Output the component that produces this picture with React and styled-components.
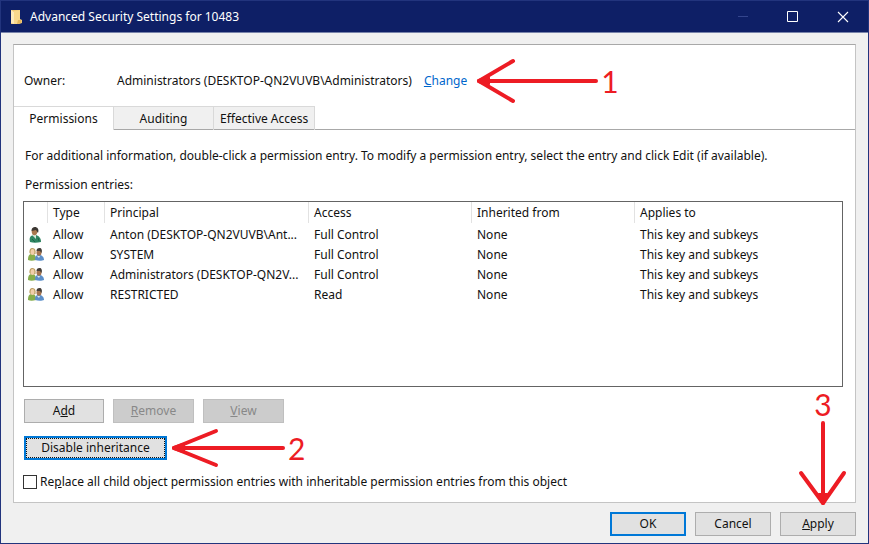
import React, { useState } from "react";
import styled, { createGlobalStyle } from "styled-components";

const columns = ["", "Type", "Principal", "Access", "Inherited from", "Applies to"];

const entries = [
  { kind: "user", principal: "Anton (DESKTOP-QN2VUVB\\Ant...", access: "Full Control" },
  { kind: "group", principal: "SYSTEM", access: "Full Control" },
  { kind: "group", principal: "Administrators (DESKTOP-QN2V...", access: "Full Control" },
  { kind: "group", principal: "RESTRICTED", access: "Read" },
];

const tabs = ["Permissions", "Auditing", "Effective Access"];

export default function App() {
  const [activeTab, setActiveTab] = useState("Permissions");
  const [replaceAll, setReplaceAll] = useState(false);

  return (
    <>
      <GlobalStyle />
      <Window>
        <TitleBar>
          <FolderIcon />
          <Title>Advanced Security Settings for 10483</Title>
          <CaptionButton aria-label="Minimize" disabled>
            <svg width="12" height="12" viewBox="0 0 12 12">
              <path d="M1 5.5h10" stroke="#34458d" />
            </svg>
          </CaptionButton>
          <CaptionButton aria-label="Maximize">
            <svg width="12" height="12" viewBox="0 0 12 12">
              <path d="M.5 .5h10v10h-10z" fill="none" stroke="#fff" />
            </svg>
          </CaptionButton>
          <CaptionButton aria-label="Close">
            <svg width="12" height="12" viewBox="0 0 12 12">
              <path d="M1 1l10 10M11 1L1 11" stroke="#fff" strokeWidth="1.1" />
            </svg>
          </CaptionButton>
        </TitleBar>

        <Panel>
          <OwnerRow>
            <OwnerLabel>Owner:</OwnerLabel>
            <span>Administrators (DESKTOP-QN2VUVB\Administrators)</span>
            <Anchor>
              <ChangeLink href="#change"><u>C</u>hange</ChangeLink>
              <SideNote $gap="8px">
                <LeftArrow width={124} spread={20} head={36} />
                <Step>1</Step>
              </SideNote>
            </Anchor>
          </OwnerRow>

          <TabList role="tablist">
            {tabs.map((tab) => (
              <Tab
                key={tab}
                role="tab"
                aria-selected={tab === activeTab}
                $active={tab === activeTab}
                onClick={() => setActiveTab(tab)}
              >
                {tab}
              </Tab>
            ))}
            <TabFiller />
          </TabList>

          <TabPage>
            <Hint>
              For additional information, double-click a permission entry. To modify a permission entry, select the entry and click Edit (if available).
            </Hint>
            <Caption id="entries-label">Permission entries:</Caption>
            <ListBox>
              <EntryTable aria-labelledby="entries-label">
                <colgroup>
                  <Column $width="24px" />
                  <Column $width="57px" />
                  <Column $width="204px" />
                  <Column $width="163px" />
                  <Column $width="163px" />
                  <col />
                </colgroup>
                <thead>
                  <tr>
                    {columns.map((name) => (
                      <HeadCell key={name}>{name}</HeadCell>
                    ))}
                  </tr>
                </thead>
                <tbody>
                  {entries.map((entry) => (
                    <tr key={entry.principal}>
                      <IconCell>
                        {entry.kind === "user" ? <UserIcon /> : <GroupIcon />}
                      </IconCell>
                      <Cell>Allow</Cell>
                      <Cell>{entry.principal}</Cell>
                      <Cell>{entry.access}</Cell>
                      <Cell>None</Cell>
                      <Cell>This key and subkeys</Cell>
                    </tr>
                  ))}
                </tbody>
              </EntryTable>
            </ListBox>

            <EntryActions>
              <PushButton $width="80px">A<u>d</u>d</PushButton>
              <PushButton $width="81px" disabled><u>R</u>emove</PushButton>
              <PushButton $width="81px" disabled><u>V</u>iew</PushButton>
            </EntryActions>

            <Anchor>
              <FocusedButton $width="143px">Disable inheritance</FocusedButton>
              <SideNote $gap="3px">
                <LeftArrow width={116} spread={17} head={44} />
                <Step>2</Step>
              </SideNote>
            </Anchor>

            <ReplaceOption>
              <CheckBox
                type="checkbox"
                checked={replaceAll}
                onChange={(e) => setReplaceAll(e.target.checked)}
              />
              <span>
                Re<u>p</u>lace all child object permission entries with inheritable permission entries from this object
              </span>
            </ReplaceOption>
          </TabPage>
        </Panel>

        <Footer>
          <PushButton $width="76px" $primary>OK</PushButton>
          <PushButton $width="76px">Cancel</PushButton>
          <Anchor>
            <PushButton $width="76px"><u>A</u>pply</PushButton>
            <TopNote>
              <Step>3</Step>
              <DownArrow />
            </TopNote>
          </Anchor>
        </Footer>
      </Window>
    </>
  );
}

function FolderIcon() {
  return (
    <svg width="12" height="16" viewBox="0 0 12 16">
      <path d="M1 1h9v9l2 1v3l-3 1H1z" fill="#f0c873" />
      <path d="M1 1l3 2v12l-3-1z" fill="#fdeaba" />
      <path d="M4 2l6-1v10l-3 4H4z" fill="#f8d88c" />
      <path d="M8 11h3v3l-4 1z" fill="#e6b85c" />
    </svg>
  );
}

function UserIcon() {
  return (
    <svg width="16" height="16" viewBox="0 0 16 16">
      <path d="M2 15c-1-4 0-6 3-7h3c3 1 5 3 5 7-4 1-8 1-11 0z" fill="#2f8562" />
      <path d="M4 8l4 4 0-4-1-2H5z" fill="#d9e8dc" />
      <ellipse cx="6.5" cy="4.5" rx="2.8" ry="3.7" fill="#a9784f" />
      <path d="M3.5 4C3.5 1 5 0 7 0s4.5 2 3 6L8 3z" fill="#3b3732" />
      <path d="M4 12l3 3M10 11l1 3" stroke="#1d6549" />
    </svg>
  );
}

function GroupIcon() {
  return (
    <svg width="16" height="16" viewBox="0 0 16 16">
      <path d="M0 13c0-4 1-6 4-6s4 2 4 6c-3 1-6 1-8 0z" fill="#86ad4c" />
      <path d="M7 13c0-4 1-5 4-5s5 2 5 5c-2 1-6 1-9 0z" fill="#5c8fc9" />
      <path d="M1.5 6C1 3 2 1 4.5 1S8 3 7.5 7L4 8z" fill="#b89a5b" />
      <ellipse cx="4.5" cy="5" rx="2" ry="3" fill="#f0cfaa" />
      <ellipse cx="11" cy="5.5" rx="2.5" ry="3.3" fill="#a37450" />
      <path d="M8.5 4c0-2 1-3 3-3s3 2 2 5l-1.500-2z" fill="#433d38" />
      <path d="M9 9l2 2 1-2" fill="#dbe8f5" />
    </svg>
  );
}

function LeftArrow({ width, spread, head }) {
  const mid = spread + 3;
  return (
    <svg width={width} height={mid * 2} fill="none" stroke="#ed1c24" strokeWidth="4" strokeLinecap="round" strokeLinejoin="round">
      <path d={`M4 ${mid}H${width - 3}`} />
      <path d={`M${head + 2} ${mid - spread}L4 ${mid}L${head + 2} ${mid + spread}`} />
      <path d={`M4 ${mid}l9-3v6z`} fill="#ed1c24" />
    </svg>
  );
}

function DownArrow() {
  return (
    <svg width="50" height="86" viewBox="0 0 50 86" fill="none" stroke="#ed1c24" strokeWidth="4" strokeLinecap="round" strokeLinejoin="round">
      <path d="M25 3v80M3 53l22 30 21-30" />
      <path d="M25 83l-4-8h8z" fill="#ed1c24" />
    </svg>
  );
}

const GlobalStyle = createGlobalStyle`
  * {
    box-sizing: border-box;
  }

  body {
    margin: 0;
    color: #111;
    font: 12px/18px "Noto Sans", "Open Sans", sans-serif;
  }

  button,
  input {
    font: inherit;
  }
`;

const Window = styled.div`
  display: flex;
  flex-direction: column;
  min-height: 100vh;
  background-color: #f0f0f0;
  border: 1px solid #22347d;
`;

const TitleBar = styled.header`
  display: flex;
  align-items: center;
  height: 32px;
  padding-left: 9px;
  color: #fff;
  background-color: #0e1f66;
  border-bottom: 1px solid #7883aa;
`;

const Title = styled.h1`
  flex: 1;
  margin: 0 0 0 8px;
  font-size: 12px;
  font-weight: 400;
`;

const CaptionButton = styled.button`
  display: flex;
  align-items: center;
  justify-content: center;
  width: 50px;
  height: 31px;
  padding: 0;
  background: none;
  border: none;
`;

const Panel = styled.main`
  display: flex;
  flex: 1;
  flex-direction: column;
  margin: 11px 12px 0;
  background-color: #fff;
  border: 1px solid #c4c4c4;
  border-top-color: #a8a8a8;
`;

const OwnerRow = styled.div`
  display: flex;
  align-items: center;
  padding: 27px 10px 16px;
`;

const OwnerLabel = styled.span`
  width: 93px;
`;

const Anchor = styled.div`
  position: relative;
  display: flex;
  align-self: flex-start;
`;

const ChangeLink = styled.a`
  margin-left: 12px;
  color: #0066cc;
  text-decoration: none;
`;

const SideNote = styled.div`
  position: absolute;
  top: 50%;
  left: 100%;
  display: flex;
  gap: 2px;
  align-items: center;
  margin-left: ${({ $gap }) => $gap};
  transform: translateY(-50%);
  pointer-events: none;
`;

const TopNote = styled.div`
  position: absolute;
  right: 8px;
  bottom: 100%;
  display: flex;
  flex-direction: column;
  align-items: center;
  margin-bottom: 6px;
  pointer-events: none;
`;

const Step = styled.span`
  color: #ed1c24;
  font: 30px/32px Lato, sans-serif;
`;

const TabList = styled.div`
  display: flex;
  height: 24px;
`;

const Tab = styled.button`
  min-width: 100px;
  padding: 0 6px;
  color: #111;
  background-color: ${({ $active }) => ($active ? "#fff" : "#f0f0f0")};
  border: solid #d9d9d9;
  border-width: 1px 1px 0 0;
  box-shadow: ${({ $active }) => ($active ? "none" : "inset 0 -1px #a8a8a8")};
`;

const TabFiller = styled.div`
  flex: 1;
  border-bottom: 1px solid #a8a8a8;
`;

const TabPage = styled.section`
  display: flex;
  flex: 1;
  flex-direction: column;
  padding: 17px 12px 11px 9px;
`;

const Hint = styled.p`
  margin: 0 0 11px 2px;
  white-space: nowrap;
`;

const Caption = styled.p`
  margin: 0 0 7px 2px;
`;

const ListBox = styled.div`
  flex: 1;
  min-height: 120px;
  border: 1px solid #646464;
`;

const EntryTable = styled.table`
  width: 100%;
  table-layout: fixed;
  border-collapse: separate;
  border-spacing: 0;
`;

const Column = styled.col`
  width: ${({ $width }) => $width};
`;

const HeadCell = styled.th`
  height: 23px;
  padding: 0 5px 1px;
  font-weight: 400;
  text-align: left;
  background: linear-gradient(#e2e2e2, #e2e2e2) right top / 1px 21px no-repeat;

  &:last-child {
    background: none;
  }
`;

const Cell = styled.td`
  height: 20px;
  padding: 0 5px;
  white-space: nowrap;
`;

const IconCell = styled.td`
  height: 20px;
  padding: 0 0 0 4px;

  svg {
    display: block;
  }
`;

const EntryActions = styled.div`
  display: flex;
  gap: 9px;
  margin: 12px 0 13px 1px;
`;

const PushButton = styled.button`
  width: ${({ $width }) => $width};
  height: 24px;
  padding: 0;
  color: #111;
  line-height: 18px;
  background-color: #e1e1e1;
  border: ${({ $primary }) => ($primary ? "2px solid #0078d7" : "1px solid #adadad")};

  &:disabled {
    color: #888;
    background-color: #ccc;
    border-color: #bfbfbf;
  }
`;

const FocusedButton = styled(PushButton)`
  margin-left: 1px;
  border: 2px solid #0078d7;
  outline: 1px dotted #111;
  outline-offset: -3px;
`;

const ReplaceOption = styled.label`
  display: flex;
  gap: 3px;
  align-items: center;
  margin-top: 13px;
`;

const CheckBox = styled.input`
  width: 14px;
  height: 14px;
  margin: 0;
  background-color: #fff;
  border: 1px solid #333;
  appearance: none;

  &:checked {
    box-shadow: inset 0 0 0 3px #fff;
    background-color: #333;
  }
`;

const Footer = styled.footer`
  display: flex;
  gap: 9px;
  justify-content: flex-end;
  padding: 9px 12px 7px;
`;
